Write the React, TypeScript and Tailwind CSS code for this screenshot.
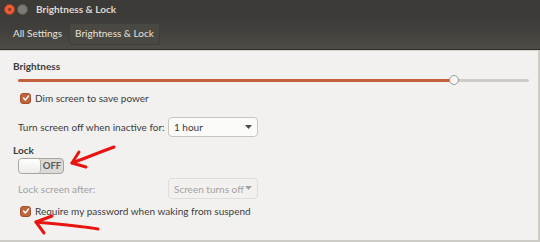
import React from "react";

const font = { fontFamily: 'Lato, "Noto Sans", "DejaVu Sans", sans-serif' };

function Check() {
  return (
    <div className="w-[11px] h-[11px] rounded-[3px] bg-[#c2633a] border border-[#a4512d] flex items-center justify-center shrink-0">
      <svg width="8" height="8" viewBox="0 0 10 10">
        <path d="M2 5.2 L4.2 7.4 L8.2 2.6" stroke="#fff" strokeWidth="1.9" fill="none" strokeLinecap="round" strokeLinejoin="round" />
      </svg>
    </div>
  );
}

export default function App() {
  return (
    <div className="w-[540px] h-[242px] bg-[#f2f1f0] relative overflow-hidden flex flex-col whitespace-nowrap" style={font}>
      {/* title bar */}
      <div className="h-[18px] bg-[#3c3b37] flex items-center pl-[4px]">
        <div className="w-[11px] h-[11px] rounded-full bg-[#e9603a] border border-[#a63c20] flex items-center justify-center">
          <span className="text-[7px] leading-none text-[#5a1a0c] font-bold">×</span>
        </div>
        <div className="w-[11px] h-[11px] rounded-full bg-[#7b7a74] border border-[#55544f] ml-[2px]" />
        <span className="ml-[8px] text-[10px] font-bold text-[#dcd9d2] leading-none">Brightness &amp; Lock</span>
      </div>
      {/* toolbar */}
      <div className="h-[32px] bg-gradient-to-b from-[#3c3b37] via-[#43423e] to-[#4d4c47] flex items-center pl-[8px] gap-[2px] border-b border-[#2e2d2a]">
        <div className="px-[5px] h-[22px] flex items-center text-[10px] text-[#e6e3dc]">All Settings</div>
        <div className="px-[5px] h-[22px] flex items-center text-[10px] text-[#e6e3dc] rounded-[3px] border border-[#3f3e3a] bg-[#494843]">Brightness &amp; Lock</div>
      </div>
      {/* content */}
      <div className="flex-1 border-r-2 border-b-2 border-[#cfccc7] border-t border-t-[#d8d5d0] pl-[13px] pr-[8px] pt-[8px] text-[10px] text-[#3c3c3c]">
        <div className="font-bold leading-[14px] text-[#3c3c3c]">Brightness</div>
        <div className="relative h-[10px] mt-[2px] ml-[5px] mr-[1px] flex items-center">
          <div className="h-[3px] w-[437px] bg-[#c5603d] rounded-l-full" />
          <div className="h-[3px] flex-1 bg-[#cfccc8] rounded-r-full" />
          <div className="absolute left-[431px] top-[0px] w-[10px] h-[10px] rounded-full bg-[#f7f6f5] border border-[#9c9a96]" />
        </div>
        <div className="flex items-center gap-[4px] mt-[6px] ml-[7px] h-[14px]">
          <Check />
          <span className="leading-none">Dim screen to save power</span>
        </div>
        <div className="flex items-center mt-[12px] ml-[5px] h-[20px]">
          <span className="w-[150px] shrink-0 leading-none">Turn screen off when inactive for:</span>
          <div className="w-[90px] h-[20px] shrink-0 rounded-[4px] border border-[#c8c5c0] bg-[#fbfbfa] flex items-center justify-between px-[5px]">
            <span className="leading-none">1 hour</span>
            <svg width="7" height="5" viewBox="0 0 7 5"><path d="M0 0 L7 0 L3.5 4 Z" fill="#4a4a4a" /></svg>
          </div>
        </div>
        <div className="font-bold leading-[14px] mt-[6px]">Lock</div>
        <div className="ml-[5px] mt-[1px] w-[46px] h-[16px] rounded-[4px] border border-[#a8a5a0] bg-[#dcdad6] flex overflow-hidden">
          <div className="w-[22px] h-full bg-gradient-to-b from-[#ffffff] to-[#ecebe9] border-r border-[#b5b2ad] rounded-[3px]" />
          <div className="flex-1 flex items-center justify-center text-[9.5px] font-bold text-[#5a5a5a] leading-none">OFF</div>
        </div>
        <div className="flex items-center mt-[4px] ml-[5px] h-[21px] text-[#a4a29e]">
          <span className="w-[150px] shrink-0 leading-none">Lock screen after:</span>
          <div className="w-[90px] h-[21px] shrink-0 rounded-[4px] border border-[#e0ddd9] bg-[#f2f1f0] flex items-center justify-between px-[5px]">
            <span className="leading-none">Screen turns off</span>
            <svg width="7" height="5" viewBox="0 0 7 5"><path d="M0 0 L7 0 L3.5 4 Z" fill="#a4a29e" /></svg>
          </div>
        </div>
        <div className="flex items-center gap-[4px] mt-[5px] ml-[7px] h-[14px]">
          <Check />
          <span className="leading-none">Require my password when waking from suspend</span>
        </div>
      </div>
      {/* red arrows overlay */}
      <svg className="absolute left-0 top-0 pointer-events-none" width="540" height="242" viewBox="0 0 540 242">
        <g stroke="#e8140f" strokeWidth="3" fill="none" strokeLinecap="round" strokeLinejoin="round">
          <path d="M114 147 C100 152 86 158 72 163" />
          <path d="M79 152 L72 163 L86 167" />
          <path d="M98 229 C80 226 55 224 36 222" />
          <path d="M52 216 L36 222 L44 233" />
        </g>
      </svg>
    </div>
  );
}
